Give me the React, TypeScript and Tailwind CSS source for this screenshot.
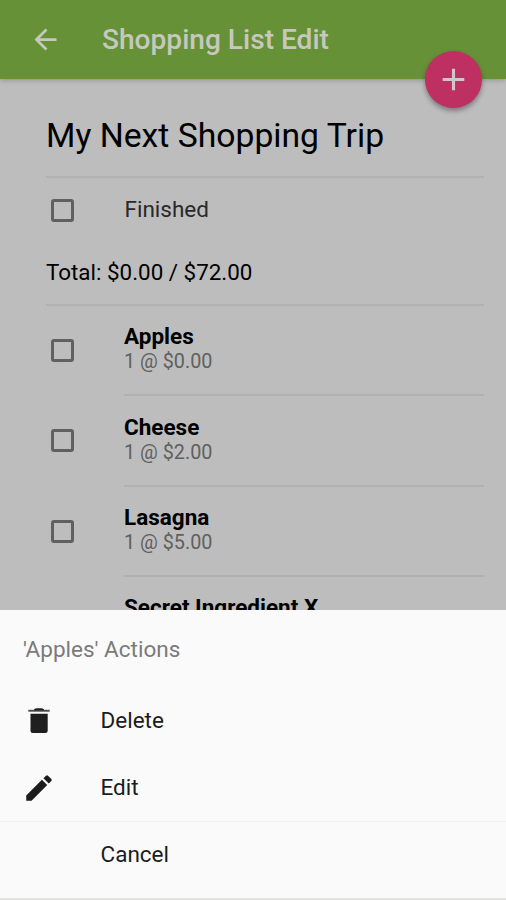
import { useState } from 'react'
import { MdAdd, MdArrowBack, MdEdit } from 'react-icons/md'

interface Item {
  name: string
  detail?: string
}

const items: Item[] = [
  { name: 'Apples', detail: '1 @ $0.00' },
  { name: 'Cheese', detail: '1 @ $2.00' },
  { name: 'Lasagna', detail: '1 @ $5.00' },
  { name: 'Secret Ingredient X' },
]

function Checkbox({ label }: { label: string }) {
  const [checked, setChecked] = useState(false)

  return (
    <button
      role="checkbox"
      aria-checked={checked}
      aria-label={label}
      onClick={() => setChecked(!checked)}
      className={`ml-[5px] size-[23px] shrink-0 rounded-[3px] border-3 border-[#606060] ${checked ? 'bg-[#606060]' : ''}`}
    />
  )
}

function TrashIcon() {
  return (
    <svg width="34" height="34" viewBox="0 0 34 34" fill="#1f1f1f" aria-hidden="true">
      <path d="M12 5.500Q13 4.200 15 4.200h4q2 0 3 1.300v.8H12z" />
      <path d="M6.300 5.800h21.400v1.900H6.300z" opacity=".8" />
      <path d="M8.500 9.700h17.200v17q0 2.300-2.300 2.300H10.800q-2.300 0-2.300-2.300z" />
    </svg>
  )
}

export default function App() {
  return (
    <div className="relative flex h-[900px] w-[506px] flex-col overflow-hidden bg-[#bdbdbd] font-[Roboto,sans-serif] text-black">
      <header className="relative z-10 flex h-[79px] shrink-0 items-center bg-[#669137] pl-[29px] text-[#c6c8bf] shadow-[0_1px_5px_rgba(0,0,0,0.25)]">
        <button aria-label="Back">
          <MdArrowBack size={33} />
        </button>
        <h1 className="ml-[40px] text-[28.1px] leading-8 font-medium">Shopping List Edit</h1>
        <button
          aria-label="Add"
          className="absolute top-[51px] right-[24.5px] flex size-[56.5px] items-center justify-center rounded-full bg-[#bf3062] text-[#d6c3ca] shadow-[0_3px_5px_rgba(0,0,0,0.35)]"
        >
          <MdAdd size={37} />
        </button>
      </header>

      <main className="flex min-h-0 flex-1 flex-col overflow-hidden pr-[22px] pl-[46px]">
        <div className="flex h-[99px] shrink-0 items-center border-b-2 border-[#b1b1b1] pt-[16px]">
          <h2 className="text-[33.7px] leading-10">My Next Shopping Trip</h2>
        </div>
        <div className="flex h-[64px] shrink-0 items-center">
          <Checkbox label="Finished" />
          <span className="ml-[50.5px] text-[22.5px] text-[#292929]">Finished</span>
        </div>
        <div className="flex h-[64px] shrink-0 items-center border-b-2 border-[#b1b1b1] pb-px text-[22.4px]">
          Total: $0.00 / $72.00
        </div>

        <ul>
          {items.map((item) => (
            <li key={item.name} className="flex h-[90.3px]">
              <div className="flex h-[89px] items-center">
                <Checkbox label={item.name} />
              </div>
              <div className="ml-[50px] flex-1 border-b-2 border-[#b1b1b1] pt-[17.4px]">
                <p className="text-[22.5px] leading-[27px] font-bold">{item.name}</p>
                {item.detail && (
                  <p className="text-[19.8px] leading-[23px] text-[#606060]">{item.detail}</p>
                )}
              </div>
            </li>
          ))}
        </ul>
      </main>

      <section className="z-20 h-[290px] shrink-0 border-b-2 border-[#e3e3e0] bg-[#fafafa]">
        <h3 className="flex h-[77px] items-center pt-[2px] pl-[23px] text-[22.5px] text-[#7b7b7b]">'Apples' Actions</h3>
        <button className="flex h-[67px] w-full items-center pl-[22px] text-[22.5px] text-[#1c1c1c]">
          <TrashIcon />
          <span className="ml-[44.5px]">Delete</span>
        </button>
        <button className="flex h-[67px] w-full items-center pl-[22px] text-[22.5px] text-[#1c1c1c]">
          <MdEdit size={34} />
          <span className="ml-[44.5px]">Edit</span>
        </button>
        <button className="flex h-[67px] w-full items-center border-t border-[#f2f2f2] pl-[100.5px] text-[22.5px] text-[#1c1c1c]">
          Cancel
        </button>
      </section>
    </div>
  )
}
